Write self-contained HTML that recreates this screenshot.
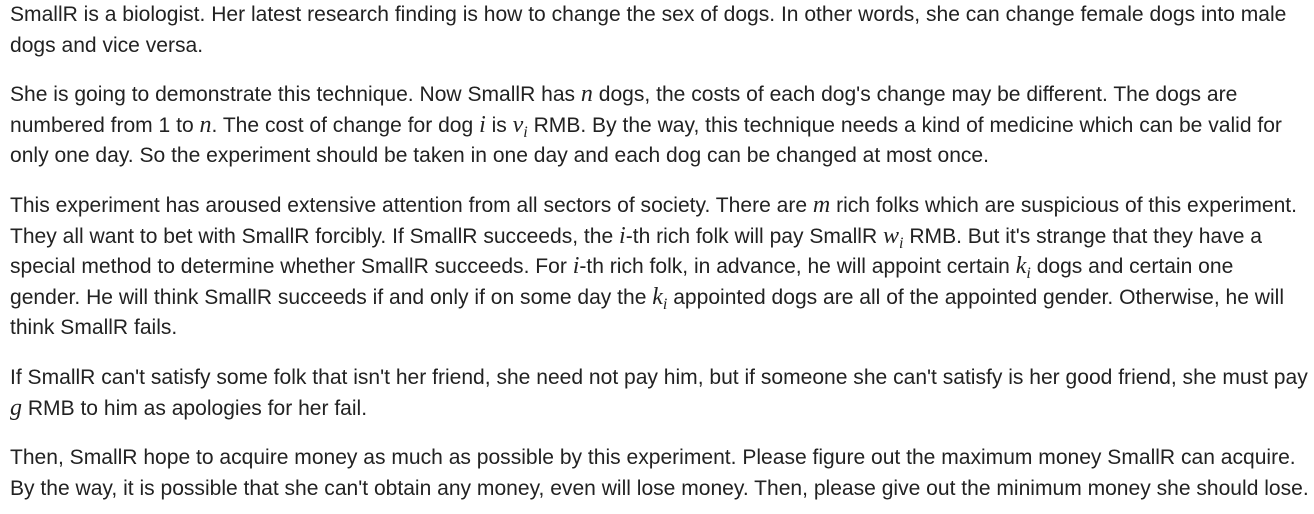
<!DOCTYPE html>
<html><head><meta charset="utf-8"><style>
html,body{margin:0;padding:0;background:#fff;}
body{width:1314px;height:514px;overflow:hidden;}
.c{padding:0 0 0 10px;width:1304px;font-family:"Liberation Sans",Arial,sans-serif;font-size:21.05px;line-height:30.6px;color:#222;white-space:nowrap;}
p{margin:0 0 19px 0;}
i{font-family:"Liberation Serif","Times New Roman",serif;font-size:24px;line-height:1;}
sub{font-size:16px;font-style:italic;font-family:"Liberation Serif",serif;line-height:0;}
</style></head><body><div class="c">
<p>SmallR is a biologist. Her latest research finding is how to change the sex of dogs. In other words, she can change female dogs into male<br>dogs and vice versa.</p>
<p>She is going to demonstrate this technique. Now SmallR has <i>n</i> dogs, the costs of each dog's change may be different. The dogs are<br>numbered from 1 to <i>n</i>. The cost of change for dog <i>i</i> is <i>v</i><sub>i</sub> RMB. By the way, this technique needs a kind of medicine which can be valid for<br>only one day. So the experiment should be taken in one day and each dog can be changed at most once.</p>
<p>This experiment has aroused extensive attention from all sectors of society. There are <i>m</i> rich folks which are suspicious of this experiment.<br>They all want to bet with SmallR forcibly. If SmallR succeeds, the <i>i</i>-th rich folk will pay SmallR <i>w</i><sub>i</sub> RMB. But it's strange that they have a<br>special method to determine whether SmallR succeeds. For <i>i</i>-th rich folk, in advance, he will appoint certain <i>k</i><sub>i</sub> dogs and certain one<br>gender. He will think SmallR succeeds if and only if on some day the <i>k</i><sub>i</sub> appointed dogs are all of the appointed gender. Otherwise, he will<br>think SmallR fails.</p>
<p>If SmallR can't satisfy some folk that isn't her friend, she need not pay him, but if someone she can't satisfy is her good friend, she must pay<br><i>g</i> RMB to him as apologies for her fail.</p>
<p>Then, SmallR hope to acquire money as much as possible by this experiment. Please figure out the maximum money SmallR can acquire.<br>By the way, it is possible that she can't obtain any money, even will lose money. Then, please give out the minimum money she should lose.</p>
</div></body></html>
